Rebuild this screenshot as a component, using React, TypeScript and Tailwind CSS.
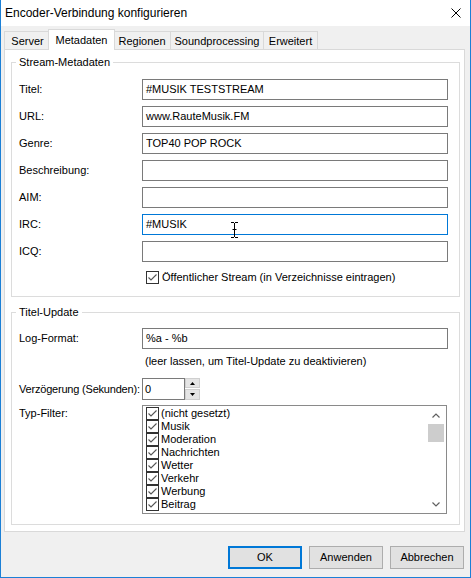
import React from 'react';

const metaRows: { label: string; value: string; focused?: boolean }[] = [
  { label: 'Titel:', value: '#MUSIK TESTSTREAM' },
  { label: 'URL:', value: 'www.RauteMusik.FM' },
  { label: 'Genre:', value: 'TOP40 POP ROCK' },
  { label: 'Beschreibung:', value: '' },
  { label: 'AIM:', value: '' },
  { label: 'IRC:', value: '#MUSIK', focused: true },
  { label: 'ICQ:', value: '' },
];

const filterItems = ['(nicht gesetzt)', 'Musik', 'Moderation', 'Nachrichten', 'Wetter', 'Verkehr', 'Werbung', 'Beitrag'];

function CheckBox() {
  return (
    <svg width="13" height="13" viewBox="0 0 13 13" className="shrink-0">
      <rect x="0.5" y="0.5" width="12" height="12" fill="#fff" stroke="#333" />
      <path d="M2.5 6.5 L5 9 L10.5 3.5" fill="none" stroke="#555" strokeWidth="1.1" />
    </svg>
  );
}

function Tab({ label, width, last }: { label: string; width: string; last?: boolean }) {
  return (
    <div
      className={`${width} h-[18px] pt-[2px] flex items-center justify-center bg-[#f0f0f0] border-t border-l border-[#d9d9d9] ${last ? 'border-r' : ''}`}
    >
      {label}
    </div>
  );
}

function Group({ title, className, children }: { title: string; className: string; children: React.ReactNode }) {
  return (
    <div className={`relative ml-[6px] w-[449px] border border-[#dcdcdc] ${className}`}>
      {/* legend sits on the frame line */}
      <span className="absolute left-[4px] top-[-8px] px-[3px] bg-white leading-[15px]">{title}</span>
      {children}
    </div>
  );
}

export default function App() {
  return (
    <div className="w-[471px] h-[578px] flex flex-col bg-[#f0f0f0] border-x border-b border-[#1c80d6] text-[11px] text-black font-['Segoe_UI','Liberation_Sans',sans-serif]">
      {/* Title bar */}
      <div className="h-[26px] shrink-0 bg-white flex items-center justify-between pl-[4px] pr-[9px] text-[12px]">
        <span>Encoder-Verbindung konfigurieren</span>
        <svg width="10" height="10" viewBox="0 0 10 10">
          <path d="M0.5 0.5 L9.5 9.5 M9.5 0.5 L0.5 9.5" stroke="#000" strokeWidth="1" />
        </svg>
      </div>

      <div className="pl-[3px] pr-[5px] pt-[3px]">
        {/* Tabs */}
        <div className="h-[20px] flex items-end">
          <Tab label="Server" width="w-[46px]" />
          <div className="relative z-10 w-[67px] h-[21px] mb-[-1px] mx-[-2px] flex items-center justify-center bg-white border-x border-t border-[#d9d9d9]">
            Metadaten
          </div>
          <Tab label="Regionen" width="w-[57px]" />
          <Tab label="Soundprocessing" width="w-[93px]" />
          <Tab label="Erweitert" width="w-[55px]" last />
        </div>

        {/* Tab page */}
        <div className="w-[461px] h-[483px] bg-white border border-[#d9d9d9] pt-[12px]">
          <Group title="Stream-Metadaten" className="h-[235px] pt-[16px] pl-[7px]">
            <div className="flex flex-col gap-[6px]">
              {metaRows.map(row => (
                <div key={row.label} className="flex items-center h-[21px]">
                  <span className="w-[123px] shrink-0">{row.label}</span>
                  <div
                    className={`relative w-[306px] h-[21px] flex items-center px-[3px] border ${row.focused ? 'border-[#0078d7]' : 'border-[#7a7a7a]'}`}
                  >
                    {row.value}
                    {row.focused && (
                      <svg width="7" height="16" viewBox="0 0 7 16" className="absolute left-[88px] top-[7px]">
                        <path d="M0 0.5 H3 M4 0.5 H7 M3.5 1 V15 M0 15.5 H3 M4 15.5 H7 M1.5 7.5 H5.5" stroke="#000" strokeWidth="1" fill="none" />
                      </svg>
                    )}
                  </div>
                </div>
              ))}
            </div>
            <div className="mt-[9px] ml-[127px] flex items-center h-[13px] gap-[3px]">
              <CheckBox />
              <span className="whitespace-nowrap">Öffentlicher Stream (in Verzeichnisse eintragen)</span>
            </div>
          </Group>

          <Group title="Titel-Update" className="mt-[15px] h-[213px] pt-[15px] pl-[7px]">
            <div className="flex items-center h-[21px]">
              <span className="w-[123px] shrink-0">Log-Format:</span>
              <div className="w-[306px] h-[21px] flex items-center px-[3px] border border-[#7a7a7a]">%a - %b</div>
            </div>
            <div className="mt-[5px] ml-[126px] leading-[15px] whitespace-nowrap">
              (leer lassen, um Titel-Update zu deaktivieren)
            </div>
            <div className="mt-[9px] flex items-center h-[22px]">
              <span className="w-[123px] shrink-0 whitespace-nowrap tracking-[-0.2px]">Verzögerung (Sekunden):</span>
              <div className="w-[43px] h-[22px] flex items-center px-[2px] border border-[#7a7a7a]">0</div>
              <div className="flex flex-col gap-[1px] h-[22px]">
                <div className="w-[15px] h-[10px] flex items-center justify-center bg-[#e5e5e5] border border-[#cfcfcf]">
                  <svg width="5" height="3" viewBox="0 0 5 3"><path d="M2.5 0 L5 3 H0 Z" fill="#000" /></svg>
                </div>
                <div className="w-[15px] h-[11px] flex items-center justify-center bg-[#e5e5e5] border border-[#cfcfcf]">
                  <svg width="5" height="3" viewBox="0 0 5 3"><path d="M0 0 H5 L2.5 3 Z" fill="#000" /></svg>
                </div>
              </div>
            </div>
            <div className="mt-[5px] flex items-start">
              <span className="w-[123px] shrink-0 pt-[1px] leading-[15px]">Typ-Filter:</span>
              <div className="w-[305px] h-[109px] flex border border-[#8a8a8a]">
                <div className="flex-1 flex flex-col pt-[1px] pl-[3px]">
                  {filterItems.map(item => (
                    <div key={item} className="h-[13px] flex items-center gap-[2px]">
                      <CheckBox />
                      <span className="leading-[13px]">{item}</span>
                    </div>
                  ))}
                </div>
                <div className="w-[16px] mr-[2px] flex flex-col">
                  <div className="h-[18px] flex items-center justify-center">
                    <svg width="8" height="5" viewBox="0 0 8 5"><path d="M0.5 4.5 L4 1 L7.5 4.5" fill="none" stroke="#606060" strokeWidth="1.2" /></svg>
                  </div>
                  <div className="h-[18px] bg-[#cdcdcd]" />
                  <div className="flex-1" />
                  <div className="h-[17px] flex items-center justify-center">
                    <svg width="8" height="5" viewBox="0 0 8 5"><path d="M0.5 0.5 L4 4 L7.5 0.5" fill="none" stroke="#606060" strokeWidth="1.2" /></svg>
                  </div>
                </div>
              </div>
            </div>
          </Group>
        </div>
      </div>

      {/* Dialog buttons */}
      <div className="mt-[14px] pr-[6px] flex justify-end gap-[7px]">
        <button className="w-[74px] h-[23px] bg-[#e1e1e1] border-2 border-[#0078d7]">OK</button>
        <button className="w-[74px] h-[23px] bg-[#e1e1e1] border border-[#adadad]">Anwenden</button>
        <button className="w-[74px] h-[23px] bg-[#e1e1e1] border border-[#adadad]">Abbrechen</button>
      </div>
    </div>
  );
}
